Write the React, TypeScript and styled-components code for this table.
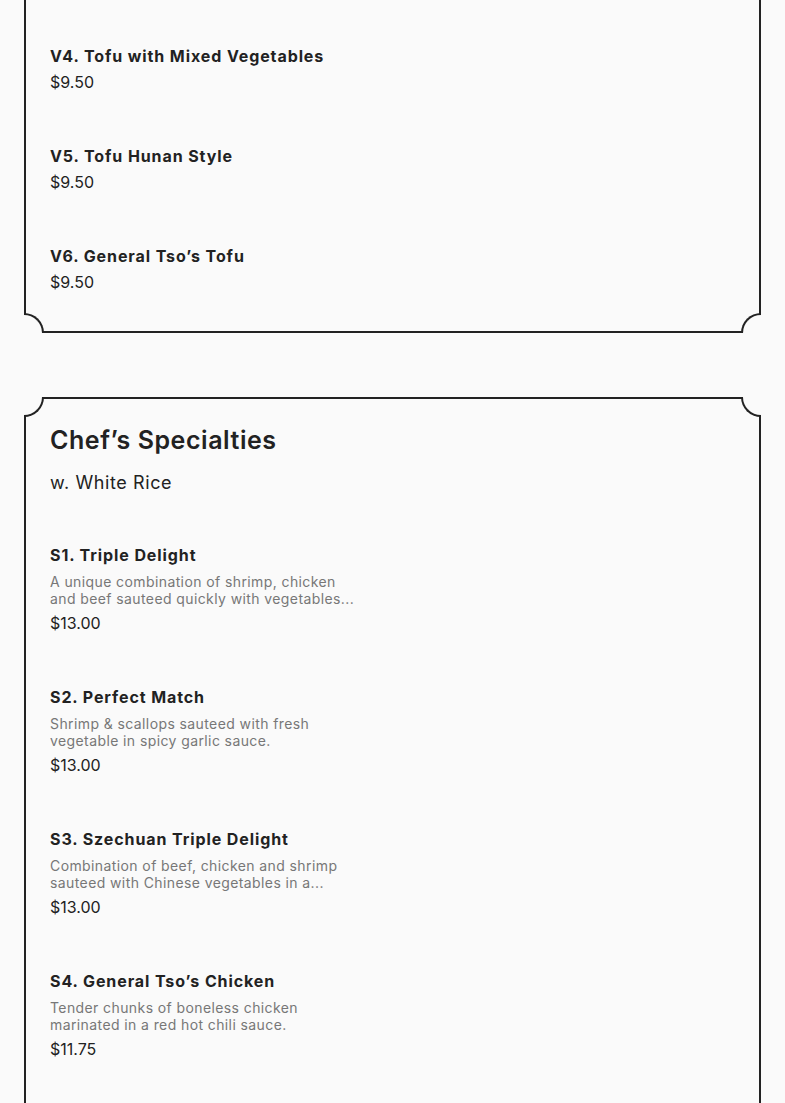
import React from "react";
import styled, { createGlobalStyle } from "styled-components";

const Global = createGlobalStyle`
  html, body {
    margin: 0;
    padding: 0;
    background: #fafafa;
  }
  body {
    font-family: Inter, "Noto Sans", sans-serif;
    color: #222222;
  }
`;

const Page = styled.main`
  display: flex;
  flex-direction: column;
  gap: 64px;
  padding: 0 24px 40px;
`;

const Card = styled.section<{ $continued?: boolean }>`
  position: relative;
  box-sizing: border-box;
  border: 2px solid #222222;
  border-top: ${(p) => (p.$continued ? "none" : "2px solid #222222")};
  padding: ${(p) => (p.$continued ? "46px" : "26px")} 24px 39px;
  display: flex;
  flex-direction: column;
`;

const Corner = styled.span<{ $v: "top" | "bottom"; $h: "left" | "right" }>`
  position: absolute;
  box-sizing: border-box;
  width: 20px;
  height: 20px;
  background: #fafafa;
  ${(p) => p.$v}: -2px;
  ${(p) => p.$h}: -2px;
  border-${(p) => (p.$v === "top" ? "bottom" : "top")}: 2px solid #222222;
  border-${(p) => (p.$h === "left" ? "right" : "left")}: 2px solid #222222;
  border-${(p) => (p.$v === "top" ? "bottom" : "top")}-${(p) =>
    p.$h === "left" ? "right" : "left"}-radius: 20px;
`;

const Title = styled.h2`
  margin: 0;
  font-size: 25px;
  line-height: 30px;
  font-weight: 600;
  letter-spacing: 0.55px;
`;

const Subtitle = styled.p`
  margin: 16px 0 50px;
  font-size: 18px;
  line-height: 24px;
  font-weight: 400;
  letter-spacing: 0.6px;
`;

const List = styled.div`
  display: flex;
  flex-direction: column;
  gap: 54px;
`;

const Item = styled.article`
  display: flex;
  flex-direction: column;
  gap: 6px;
`;

const Name = styled.h3`
  margin: 0;
  font-size: 16px;
  line-height: 20px;
  font-weight: 700;
  letter-spacing: 0.9px;
`;

const Desc = styled.p`
  margin: 2px 0 0;
  width: 305px;
  font-size: 14px;
  line-height: 17px;
  letter-spacing: 0.4px;
  color: #777777;
  display: -webkit-box;
  -webkit-line-clamp: 2;
  -webkit-box-orient: vertical;
  overflow: hidden;
`;

const Price = styled.span`
  font-size: 16px;
  line-height: 20px;
`;

type Dish = { name: string; desc?: string; price: string };

const vegetables: Dish[] = [
  { name: "V4. Tofu with Mixed Vegetables", price: "$9.50" },
  { name: "V5. Tofu Hunan Style", price: "$9.50" },
  { name: "V6. General Tso’s Tofu", price: "$9.50" },
];

const specialties: Dish[] = [
  {
    name: "S1. Triple Delight",
    desc: "A unique combination of shrimp, chicken and beef sauteed quickly with vegetables...",
    price: "$13.00",
  },
  {
    name: "S2. Perfect Match",
    desc: "Shrimp & scallops sauteed with fresh vegetable in spicy garlic sauce.",
    price: "$13.00",
  },
  {
    name: "S3. Szechuan Triple Delight",
    desc: "Combination of beef, chicken and shrimp sauteed with Chinese vegetables in a...",
    price: "$13.00",
  },
  {
    name: "S4. General Tso’s Chicken",
    desc: "Tender chunks of boneless chicken marinated in a red hot chili sauce.",
    price: "$11.75",
  },
  {
    name: "S5. Sesame Chicken",
    desc: "Chunks of chicken sauteed in a sweet sauce, topped with sesame seeds.",
    price: "$11.75",
  },
];

const Dishes = ({ items }: { items: Dish[] }) => (
  <List>
    {items.map((d) => (
      <Item key={d.name}>
        <Name>{d.name}</Name>
        {d.desc && <Desc>{d.desc}</Desc>}
        <Price>{d.price}</Price>
      </Item>
    ))}
  </List>
);

export default function App() {
  return (
    <>
      <Global />
      <Page>
        <Card $continued>
          <Dishes items={vegetables} />
          <Corner $v="bottom" $h="left" />
          <Corner $v="bottom" $h="right" />
        </Card>
        <Card>
          <Corner $v="top" $h="left" />
          <Corner $v="top" $h="right" />
          <Title>Chef’s Specialties</Title>
          <Subtitle>w. White Rice</Subtitle>
          <Dishes items={specialties} />
          <Corner $v="bottom" $h="left" />
          <Corner $v="bottom" $h="right" />
        </Card>
      </Page>
    </>
  );
}
